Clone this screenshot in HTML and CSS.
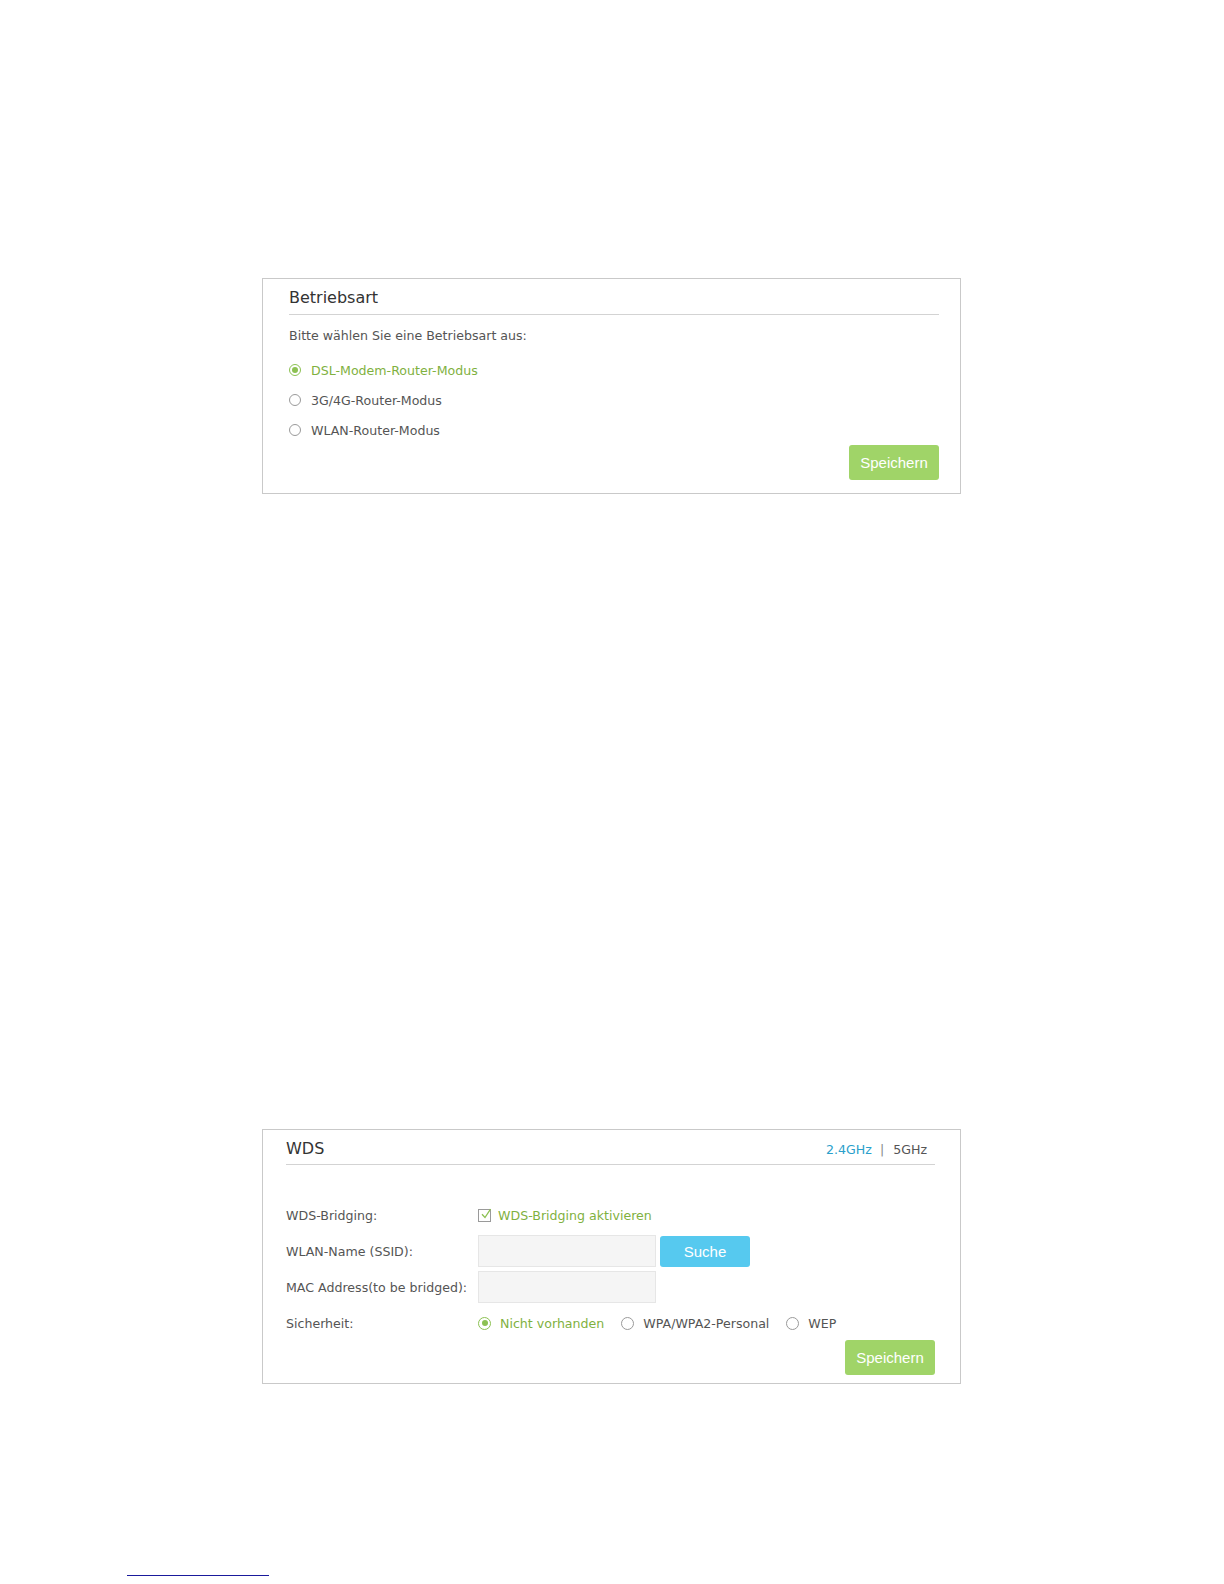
FILE: index.html
```html
<!DOCTYPE html>
<html lang="de">

<head>
    <meta charset="UTF-8">
    <meta name="viewport" content="width=device-width, initial-scale=1.0">
    <title>Betriebsart / WDS</title>
    <link rel="stylesheet" href="styles.css">
</head>

<body>
<div class="page">

    <form class="panel panel-mode" action="#" method="post">
        <div class="panel-head">
            <h2>Betriebsart</h2>
        </div>

        <p class="hint">Bitte wählen Sie eine Betriebsart aus:</p>

        <div class="mode-list">
            <label class="radio checked">
                <input type="radio" name="mode" value="dsl" checked>
                <span class="dot"></span>
                DSL-Modem-Router-Modus
            </label>
            <label class="radio">
                <input type="radio" name="mode" value="3g4g">
                <span class="dot"></span>
                3G/4G-Router-Modus
            </label>
            <label class="radio">
                <input type="radio" name="mode" value="wlan">
                <span class="dot"></span>
                WLAN-Router-Modus
            </label>
        </div>

        <div class="actions">
            <button type="submit" class="btn btn-green">Speichern</button>
        </div>
    </form>

    <form class="panel panel-wds" action="#" method="post">
        <div class="panel-head">
            <h2>WDS</h2>
            <div class="band">
                <a href="#" class="band-active">2.4GHz</a>
                <span class="band-sep">|</span>
                <a href="#">5GHz</a>
            </div>
        </div>

        <div class="rows">
            <div class="row">
                <span class="row-label">WDS-Bridging:</span>
                <label class="check checked">
                    <input type="checkbox" name="wds" checked>
                    <span class="box">
                        <svg width="13" height="13" viewBox="0 0 13 13">
                            <path d="M3 6.2 L6 9.5 L11.5 1.2" fill="none" stroke="#8cc152" stroke-width="1.3"/>
                        </svg>
                    </span>
                    WDS-Bridging aktivieren
                </label>
            </div>
            <div class="row">
                <span class="row-label">WLAN-Name (SSID):</span>
                <input type="text" class="field" name="ssid">
                <button type="button" class="btn btn-blue">Suche</button>
            </div>
            <div class="row">
                <span class="row-label">MAC Address(to be bridged):</span>
                <input type="text" class="field" name="mac">
            </div>
            <div class="row">
                <span class="row-label">Sicherheit:</span>
                <label class="radio checked">
                    <input type="radio" name="sec" value="none" checked>
                    <span class="dot"></span>
                    Nicht vorhanden
                </label>
                <label class="radio">
                    <input type="radio" name="sec" value="wpa">
                    <span class="dot"></span>
                    WPA/WPA2-Personal
                </label>
                <label class="radio">
                    <input type="radio" name="sec" value="wep">
                    <span class="dot"></span>
                    WEP
                </label>
            </div>
        </div>

        <div class="actions">
            <button type="submit" class="btn btn-green">Speichern</button>
        </div>
    </form>

    <div class="footnote"></div>
</div>
</body>

</html>
```

FILE: styles.css
```css
body {
    margin: 0;
    font-family: 'DejaVu Sans', Verdana, sans-serif;
    font-size: 12.6px;
    color: #555;
    background-color: #fff;
}

.page {
    padding-top: 278px;
}

.panel {
    box-sizing: border-box;
    width: 699px;
    margin: 0 0 0 262px;
    border: 1px solid #c9c9c9;
}

.panel-mode {
    padding: 0 21px 13px 26px;
}

.panel-wds {
    margin-top: 635px;
    padding: 0 25px 8px 23px;
}

.panel-head {
    display: flex;
    justify-content: space-between;
    align-items: baseline;
    padding: 8px 0 5px;
    border-bottom: 1px solid #d3d3d3;
}

.panel-head h2 {
    margin: 0;
    font-size: 16px;
    font-weight: normal;
    line-height: 22px;
    color: #333;
}

.panel-wds .panel-head {
    padding: 8px 0 4px;
}

.band {
    padding-right: 8px;
    color: #555;
}

.band a {
    color: #555;
    text-decoration: none;
}

.band a.band-active {
    color: #2a9fcb;
}

.band-sep {
    margin: 0 5px 0 4px;
    color: #888;
}

.hint {
    margin: 11px 0 9px;
    line-height: 20px;
}

.mode-list .radio {
    height: 30px;
}

/* radio and checkbox look */
.radio,
.check {
    display: flex;
    align-items: center;
    cursor: pointer;
}

.radio input,
.check input {
    display: none;
}

.dot {
    box-sizing: border-box;
    width: 12px;
    height: 12px;
    margin: 0 10px 0 0;
    border: 1px solid #9a9a9a;
    border-radius: 50%;
    position: relative;
}

.radio.checked {
    color: #7fb13f;
}

.radio.checked .dot {
    border-color: #8cc152;
}

.radio.checked .dot:before {
    content: "";
    position: absolute;
    left: 2px;
    top: 2px;
    width: 6px;
    height: 6px;
    border-radius: 50%;
    background-color: #8cc152;
}

.check.checked {
    color: #7fb13f;
}

.box {
    box-sizing: border-box;
    position: relative;
    width: 13px;
    height: 13px;
    margin-right: 7px;
    border: 1px solid #9a9a9a;
}

.box svg {
    position: absolute;
    left: 0;
    top: -2px;
}

.actions {
    display: flex;
    justify-content: flex-end;
}

.btn {
    height: 35px;
    width: 90px;
    padding: 0;
    border: none;
    border-radius: 3px;
    font-family: 'Liberation Sans', Arial, sans-serif;
    font-size: 15px;
    color: #fff;
    cursor: pointer;
}

.btn-green {
    background-color: #a0d468;
}

.panel-wds .actions {
    margin-top: 1px;
}

.btn-blue {
    height: 31px;
    margin-left: 4px;
    background-color: #56c9ef;
}

.rows {
    margin-top: 34px;
    display: flex;
    flex-direction: column;
    gap: 4px;
}

.row {
    display: flex;
    align-items: center;
    height: 32px;
}

.row-label {
    width: 192px;
    flex-shrink: 0;
}

.row .radio {
    margin-right: 17px;
}

.row .dot {
    width: 13px;
    height: 13px;
    margin-right: 9px;
}

.row .radio.checked .dot:before {
    left: 2.5px;
    top: 2.5px;
}

.field {
    box-sizing: border-box;
    width: 178px;
    height: 32px;
    margin: 0;
    border: 1px solid #e6e6e6;
    background-color: #f5f5f5;
}

.footnote {
    width: 142px;
    margin: 191px 0 0 127px;
    border-top: 1px solid #1a1a9c;
}
```
